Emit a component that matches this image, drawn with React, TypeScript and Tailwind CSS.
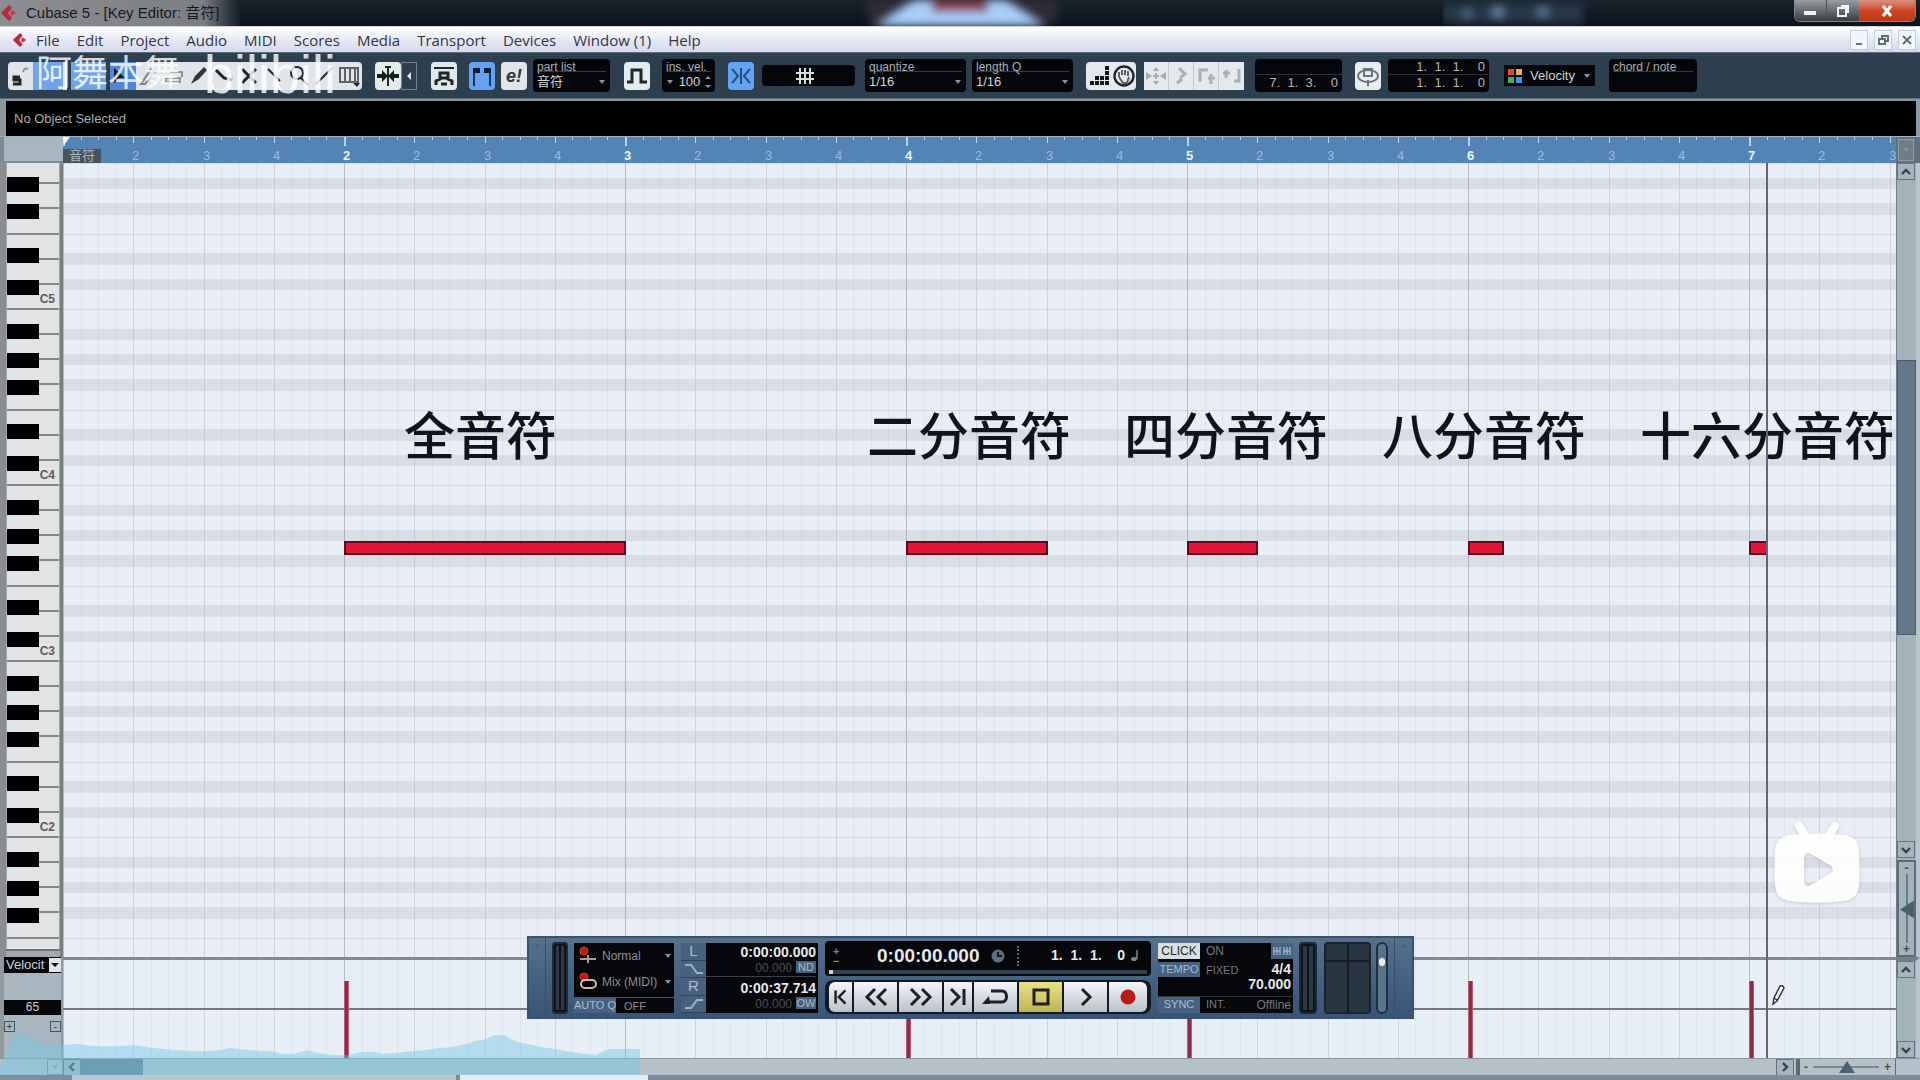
import React from "react";

const BAR = 281;
const at = (beats: number) => Math.round((beats * BAR) / 4);

type Mark = { x: number; kind: "bar" | "beat" | "step" };
const MARKS: Mark[] = Array.from({ length: 106 }, (_, i) => ({
  x: at(i / 4),
  kind: i % 16 === 0 ? "bar" : i % 4 === 0 ? "beat" : "step",
}));

const NOTES = [
  { beat: 4, length: 4 },
  { beat: 12, length: 2 },
  { beat: 16, length: 1 },
  { beat: 20, length: 0.5 },
  { beat: 24, length: 0.25 },
];

const CAPTIONS = [
  { text: "全音符", x: 341 },
  { text: "二分音符", x: 804 },
  { text: "四分音符", x: 1061 },
  { text: "八分音符", x: 1319 },
  { text: "十六分音符", x: 1577 },
];

const MENUS = ["File", "Edit", "Project", "Audio", "MIDI", "Scores", "Media", "Transport", "Devices", "Window (1)", "Help"];

function GridLines() {
  return (
    <svg className="absolute inset-0 h-full w-full" aria-hidden="true">
      {MARKS.map((m) => (
        <rect
          key={m.x}
          x={m.x}
          y="0"
          width="1"
          height="100%"
          fill={m.kind === "bar" ? "#80899c" : "#8d98ac"}
          opacity={m.kind === "bar" ? 0.5 : m.kind === "beat" ? 0.28 : 0.11}
        />
      ))}
    </svg>
  );
}

function OctaveRows() {
  return (
    <div className="flex w-full shrink-0 flex-col">
      <div className="h-[19px]" />
      <div className="h-[11px] bg-[#d9dde6]" />
      <div className="h-[14px]" />
      <div className="h-[11px] bg-[#d9dde6]" />
      <div className="h-[14px]" />
      <div className="h-[12px] bg-[#d9dde6]" />
      <div className="h-[20px] border-b border-[#d3d8e1]" />
      <div className="h-[18px]" />
      <div className="h-[12px] bg-[#d9dde6]" />
      <div className="h-[14px]" />
      <div className="h-[11px] bg-[#d9dde6]" />
      <div className="h-[20px] border-b border-[#d3d8e1]" />
    </div>
  );
}

function OctaveKeys({ label }: { label: string }) {
  return (
    <div className="relative flex h-44 w-full shrink-0 flex-col">
      {["B", "A", "G", "F", "E", "D", "C"].map((n) => (
        <div key={n} className="flex flex-1 items-end justify-end border-b-2 border-[#85878a] bg-[#e2e3e4] pb-0.5 pr-1 text-[12px] font-bold leading-[14px] text-[#5b5d60]">
          {n === "C" ? label : ""}
        </div>
      ))}
      <div className="absolute left-0 top-[14px] h-[15px] w-8 bg-black" />
      <div className="absolute left-0 top-[43px] h-[15px] w-8 bg-black" />
      <div className="absolute left-0 top-[70px] h-[15px] w-8 bg-black" />
      <div className="absolute left-0 top-[114px] h-[15px] w-8 bg-black" />
      <div className="absolute left-0 top-[146px] h-[15px] w-8 bg-black" />
    </div>
  );
}

function Chevron({ dir }: { dir: "up" | "down" | "left" | "right" }) {
  const d = { up: "M3 9 7 5l4 4", down: "M3 5l4 4 4-4", left: "M9 3 5 7l4 4", right: "M5 3l4 4-4 4" }[dir];
  return (
    <svg viewBox="0 0 14 14" className="h-3.5 w-3.5" fill="none" stroke="#33434d" strokeWidth="2.4" aria-hidden="true">
      <path d={d} />
    </svg>
  );
}

function ScrollButton({ dir, label }: { dir: "up" | "down" | "left" | "right"; label: string }) {
  return (
    <button aria-label={label} className="flex h-[17px] w-[18px] shrink-0 items-center justify-center border border-[#62757f] bg-[#a5b4bd]">
      <Chevron dir={dir} />
    </button>
  );
}

function CubaseLogo({ className }: { className: string }) {
  return (
    <svg viewBox="0 0 18 18" className={className} aria-hidden="true">
      <path d="M1 9 9 1l3 3-4 5 4 5-3 3z" fill="#b8283e" />
      <path d="M12 6l4 3-4 3-2-3z" fill="#c9364a" />
    </svg>
  );
}

function Tool({ label, className, children }: { label: string; className: string; children?: React.ReactNode }) {
  return (
    <button aria-label={label} className={`flex h-7 shrink-0 items-center justify-center ${className}`}>
      <svg viewBox="0 0 24 24" className="h-6 w-6" fill="none" stroke="#20262b" strokeWidth="2" aria-hidden="true">
        {children}
      </svg>
    </button>
  );
}

function Caret() {
  return (
    <svg viewBox="0 0 8 6" className="h-1.5 w-2 shrink-0" aria-hidden="true">
      <path d="M1 1h6L4 5z" fill="#8d959b" />
    </svg>
  );
}

function Field({ title, value, className }: { title: string; value: string; className: string }) {
  return (
    <div className={`flex h-[33px] shrink-0 flex-col rounded-sm bg-[#04060a] px-1 text-[12px] text-[#a9b0b5] ${className}`}>
      <span className="h-[13px] whitespace-nowrap border-b border-[#343a40] leading-4">{title}</span>
      {value && (
        <button aria-label={title} className="flex flex-1 items-center justify-between text-[13px] leading-4 text-[#d3d7da]">
          <span>{value}</span>
          <Caret />
        </button>
      )}
    </div>
  );
}

function Position({ rows, className }: { rows: string[]; className: string }) {
  return (
    <div className={`flex h-[33px] shrink-0 flex-col rounded-sm bg-[#05060b] text-right text-[13px] leading-4 text-[#b9b4ac] ${className}`}>
      {rows.map((r, i) => (
        <span key={i} className={i === 0 ? "h-4 whitespace-pre border-b border-[#2c3036] pr-1" : "h-4 whitespace-pre pr-1"}>
          {r}
        </span>
      ))}
    </div>
  );
}

function TitleBar() {
  return (
    <header className="flex h-[26px] shrink-0 items-start justify-between bg-linear-to-b from-[#1a232c] to-[#0a121b]">
      <div className="flex h-full w-[240px] shrink-0 items-center gap-2 bg-linear-to-r from-[#8d8e91] from-0% via-[#7b7e82] via-85% to-[#141c25]">
        <CubaseLogo className="h-[18px] w-[18px]" />
        <h1 className="whitespace-nowrap text-[15px] text-[#17191c]">Cubase 5 - [Key Editor: 音符]</h1>
      </div>
      <svg viewBox="0 0 900 26" className="h-[26px] w-[900px]" aria-hidden="true">
        <defs>
          <filter id="soft" x="-20%" y="-60%" width="140%" height="220%">
            <feGaussianBlur stdDeviation="4" />
          </filter>
        </defs>
        <g filter="url(#soft)">
          <path d="M476 0h190v24H476z" fill="#4a3842" opacity=".5" />
          <path d="M524 0h90l40 26H484z" fill="#a9cdf8" />
          <path d="M541 0h56v12h-56z" fill="#8a3f50" />
        </g>
      </svg>
      <svg viewBox="0 0 200 26" className="h-[26px] w-[200px]" aria-hidden="true">
        <g filter="url(#soft)">
          <path d="M0 3h140v20H0z" fill="#263848" />
          <circle cx="24" cy="14" r="5" fill="#51687e" />
          <circle cx="55" cy="12" r="6" fill="#68829c" />
          <circle cx="100" cy="12" r="6" fill="#58718a" />
        </g>
      </svg>
      <div className="mr-1 flex h-[22px] overflow-hidden rounded-b-md border border-t-0 border-[#80868c]">
        <button aria-label="Minimize" className="flex w-8 items-end justify-center border-r border-[#4b5157] bg-linear-to-b from-[#9b9ea1] to-[#3a3d42] pb-1.5">
          <span className="h-1 w-3 bg-[#eef0f1]" />
        </button>
        <button aria-label="Restore" className="flex w-8 items-center justify-center bg-linear-to-b from-[#9b9ea1] to-[#3a3d42]">
          <svg viewBox="0 0 14 14" className="h-3.5 w-3.5" fill="none" stroke="#f0f2f3" strokeWidth="2" aria-hidden="true">
            <path d="M2 4h8v8H2zM5 2h7v7" />
          </svg>
        </button>
        <button aria-label="Close" className="flex w-14 items-center justify-center bg-linear-to-b from-[#d9907e] via-[#cf4526] to-[#b83a18]">
          <svg viewBox="0 0 14 14" className="h-3.5 w-3.5" fill="none" stroke="#fff" strokeWidth="3" aria-hidden="true">
            <path d="M3 2l8 10M11 2 3 12" />
          </svg>
        </button>
      </div>
    </header>
  );
}

function MenuBar() {
  return (
    <nav className="flex h-[26px] shrink-0 items-center border-t border-[#cfd2d8] bg-linear-to-b from-white via-[#e6e9f6] to-[#d6daec] pl-3 pr-1">
      <CubaseLogo className="mr-2 h-4 w-4" />
      <div className="flex flex-1 gap-[17px] font-['Open_Sans','Noto_Sans_CJK_SC',sans-serif] text-[15px] leading-6 text-[#33363d]">
        {MENUS.map((m) => (
          <button key={m} className="whitespace-nowrap">
            {m}
          </button>
        ))}
      </div>
      <div className="flex gap-1.5">
        {[
          { label: "Minimize editor", d: "M4 11h6" },
          { label: "Restore editor", d: "M3 6h6v5H3zM6 6V3h6v5H9" },
          { label: "Close editor", d: "M3 3l8 8M11 3l-8 8" },
        ].map((b) => (
          <button key={b.label} aria-label={b.label} className="flex h-5 w-[18px] items-center justify-center border border-[#c3cdd8] bg-[#f1f6fa]">
            <svg viewBox="0 0 14 14" className="h-3.5 w-3.5" fill="none" stroke="#5c7081" strokeWidth="2" aria-hidden="true">
              <path d={b.d} />
            </svg>
          </button>
        ))}
      </div>
    </nav>
  );
}

const WHITE = "bg-[#dfe5e8]";

function ToolBar() {
  return (
    <div className="flex h-[47px] shrink-0 items-center border-y border-[#5d6f7b] bg-[#2d3e4e] pl-2">
      <Tool label="Solo editor" className="w-[25px] rounded-l-sm bg-[#dfe5e8]">
        <path d="M11 13H5v3h6v4H4" strokeWidth="3" />
        <path d="M14 8c1-4 3-4 5-3" stroke="#8c969c" />
      </Tool>
      <Tool label="Acoustic feedback" className="w-[34px] border-r-4 border-[#dfe5e8] bg-[#6fa3e6]" />
      <Tool label="Show info" className="ml-1 w-[35px] bg-[#6fa3e6]" />
      <Tool label="Object selection" className="ml-1 w-[26px] bg-[#4f86d8]">
        <path d="M3 4v15l5-5h6z" fill="#0b1626" stroke="none" />
      </Tool>
      <Tool label="Draw" className={`w-[25px] ${WHITE}`}>
        <path d="M4 20 14 5l4 3L8 20z" stroke="#7b868c" />
      </Tool>
      <Tool label="Erase" className={`w-[25px] ${WHITE}`}>
        <path d="M4 14h14v4H4zM8 8h12v5" stroke="#8c969c" />
      </Tool>
      <Tool label="Trim" className={`w-[25px] ${WHITE}`}>
        <path d="M4 20 8 12 17 3l3 3-8 9z" fill="#30363a" stroke="none" />
      </Tool>
      <Tool label="Split" className={`w-[25px] ${WHITE}`}>
        <path d="M4 6l8 8 8 2" strokeWidth="3" />
      </Tool>
      <Tool label="Mute" className={`w-[25px] ${WHITE}`}>
        <path d="M5 5l14 14M19 5 5 19" strokeWidth="3" />
      </Tool>
      <Tool label="Glue" className={`w-[25px] ${WHITE}`}>
        <path d="M6 5l12 12" />
      </Tool>
      <Tool label="Zoom" className={`w-[25px] ${WHITE}`}>
        <circle cx="10" cy="9" r="6" />
        <path d="M14 14l7 7" />
      </Tool>
      <Tool label="Line" className={`w-[25px] ${WHITE}`}>
        <path d="M4 20 20 4" />
      </Tool>
      <Tool label="Time warp" className="w-[26px] rounded-r-sm bg-[#dfe5e8]">
        <path d="M3 4h18v14H3zM8 4v14M13 4v14M18 4v14" stroke="#596369" />
        <path d="M16 19h7l-3 4z" fill="#20262b" stroke="none" />
      </Tool>

      <Tool label="Auto-scroll" className="ml-[13px] w-[26px] rounded-sm bg-[#e3ece9]">
        <path d="M12 2v20M9 3h6" />
        <path d="M12 12 6 6v4H1v4h5v4zM12 12l6-6v4h5v4h-5v4z" fill="#15201c" stroke="none" />
      </Tool>
      <button aria-label="Auto-scroll options" className="flex h-7 w-4 shrink-0 items-center justify-center border border-[#75838e]">
        <svg viewBox="0 0 6 8" className="h-2 w-1.5" aria-hidden="true">
          <path d="M5 0v8L1 4z" fill="#dfe5e8" />
        </svg>
      </button>
      <Tool label="Auto select controllers" className="ml-[14px] w-[26px] rounded-sm bg-[#dfe9ea]">
        <path d="M2 4h20" />
        <path d="M4 21v-4l4-2V9h8v6l4 2v4" strokeWidth="3" />
        <path d="M9 14h6M9 20h6" strokeWidth="3" />
      </Tool>
      <Tool label="Show part borders" className="ml-3 w-[26px] rounded-sm bg-[#65a3f2]">
        <path d="M4 22V6h4M20 22V6h-4" stroke="#183457" />
        <path d="M3 4h7v5H3zM14 4h7v5h-7z" fill="#0d1b30" stroke="none" />
      </Tool>
      <button className="ml-1.5 h-7 w-[26px] shrink-0 rounded-sm bg-[#dfe5e8] text-[18px] font-bold italic leading-7 text-[#30363a]">e!</button>
      <Field title="part list" value="音符" className="ml-1.5 w-[77px]" />
      <Tool label="Step input" className="ml-[14px] w-[26px] rounded-sm bg-[#e3ecee]">
        <path d="M2 18h5V6h9v12h6" strokeWidth="3" />
      </Tool>
      <div className="ml-3 flex h-[33px] w-[53px] shrink-0 flex-col rounded-sm bg-[#04060a] px-1 text-[12px] text-[#a9b0b5]">
        <span className="h-[13px] whitespace-nowrap border-b border-[#343a40] leading-4">ins. vel.</span>
        <button aria-label="Insert velocity" className="flex flex-1 items-center justify-between text-[13px] text-[#d3d7da]">
          <Caret />
          100
          <svg viewBox="0 0 6 14" className="h-3.5 w-1.5" fill="#8d959b" aria-hidden="true">
            <path d="M0 4h6L3 1zM0 10h6l-3 3z" />
          </svg>
        </button>
      </div>
      <Tool label="Snap" className="ml-[13px] w-[26px] rounded-sm bg-[#65a3f2]">
        <path d="M12 4v16M3 5l6 7-6 7M21 5l-6 7 6 7" stroke="#264d80" />
      </Tool>
      <button aria-label="Snap type" className="ml-2 flex h-[21px] w-[93px] shrink-0 items-center justify-center rounded-sm bg-[#04060a]">
        <svg viewBox="0 0 18 16" className="mr-2 h-4 w-[18px]" fill="none" stroke="#d5e2dc" strokeWidth="2" aria-hidden="true">
          <path d="M4 0v16M9 0v16M14 0v16M0 5h18M0 11h18" />
        </svg>
      </button>
      <Field title="quantize" value="1/16" className="ml-2.5 w-[101px]" />
      <Field title="length Q" value="1/16" className="ml-1.5 w-[101px]" />
      <Tool label="Step" className="ml-[13px] w-[25px] rounded-l-sm bg-[#e3e9ec]">
        <g fill="#14181b" stroke="none">
          <path d="M3 17h4v4H3zM8 17h4v4H8zM13 17h4v4h-4zM18 17h4v4h-4zM8 12h4v4H8zM13 12h4v4h-4zM18 12h4v4h-4zM18 7h4v4h-4zM18 2h4v4h-4z" />
        </g>
      </Tool>
      <Tool label="MIDI input" className="w-[25px] rounded-r-sm bg-[#e3e9ec]">
        <circle cx="12" cy="12" r="9.5" strokeWidth="2.4" />
        <path d="M7 13V8M10 11V6M13 11V6M16 12V7M7 13l4 6h4l2-6" stroke="#596369" />
      </Tool>
      <Tool label="Move insert mode" className="ml-2 w-[25px] border-r border-[#c2cacf] bg-[#e3e9ec]">
        <path d="M12 3l3 4H9zM12 21l3-4H9zM2 8l6 4-6 4zM22 8l-6 4 6 4z" fill="#a3acb2" stroke="none" />
        <path d="M12 9v6M9 12h6" stroke="#a3acb2" />
      </Tool>
      <Tool label="Record note pitch" className="w-[25px] border-r border-[#c2cacf] bg-[#e3e9ec]">
        <path d="M10 4l6 6-5 4M8 19l5-4" stroke="#a9b1b6" strokeWidth="3" />
      </Tool>
      <Tool label="Record note-on velocity" className="w-[25px] border-r border-[#c2cacf] bg-[#e3e9ec]">
        <path d="M6 18V6h8M14 14h7M17 10v10" stroke="#a9b1b6" strokeWidth="3" />
      </Tool>
      <Tool label="Record note-off velocity" className="w-[25px] bg-[#e3e9ec]">
        <path d="M6 6v8M3 9h7M19 5v12h-5" stroke="#a9b1b6" strokeWidth="3" />
      </Tool>
      <Position rows={["", "7.  1.  3.    0"]} className="ml-[11px] w-[87px]" />
      <Tool label="Independent track loop" className="ml-[13px] w-[26px] rounded-sm bg-[#e8eff0]">
        <ellipse cx="12" cy="12" rx="10" ry="6" stroke="#6b757b" />
        <path d="M8 5h8v7H8zM12 16v6" stroke="#6b757b" />
      </Tool>
      <Position rows={["1.  1.  1.    0", "1.  1.  1.    0"]} className="ml-[7px] w-[101px]" />
      <button className="ml-[15px] flex h-[21px] w-[91px] shrink-0 items-center justify-between bg-[#04060a] px-1 text-[13px] text-[#cfd4d8]">
        <svg viewBox="0 0 14 14" className="h-3.5 w-3.5" aria-hidden="true">
          <path d="M0 0h6v6H0z" fill="#d9502c" />
          <path d="M8 0h6v6H8z" fill="#e8b04a" />
          <path d="M0 8h6v6H0z" fill="#3fae6d" />
          <path d="M8 8h6v6H8z" fill="#3c9be8" />
        </svg>
        Velocity
        <Caret />
      </button>
      <Field title="chord / note" value="" className="ml-[14px] w-[88px]" />
    </div>
  );
}

function Ruler() {
  return (
    <div className="flex h-[27px] shrink-0 border-t border-[#9fb4c6]">
      <div className="w-[63px] shrink-0 border-b-2 border-l-4 border-[#7d8b93] bg-[#a9b6bf]" />
      <div className="relative flex-1 overflow-hidden bg-[#5384b5]">
        <svg className="absolute inset-0 h-full w-full" aria-hidden="true">
          {MARKS.map((m) => (
            <rect key={m.x} x={m.x} y="0" width={m.kind === "bar" ? 2 : 1} height={m.kind === "bar" ? 9 : m.kind === "beat" ? 6 : 3} fill="#bcd4e6" />
          ))}
          <path d="M0 0h7L1 8z" fill="#fff" />
        </svg>
        {MARKS.filter((m) => m.kind !== "step" && m.x > 0).map((m, i) => {
          const n = i + 1;
          const isBar = n % 4 === 0;
          return (
            <span
              key={m.x}
              className={isBar ? "absolute bottom-0 text-[13px] font-bold leading-[14px] text-[#e9f4fb]" : "absolute bottom-0 text-[13px] leading-[14px] text-[#9dbdd6]"}
              style={{ left: m.x - 1 }}
            >
              {isBar ? n / 4 + 1 : (n % 4) + 1}
            </span>
          );
        })}
        <span className="absolute bottom-0 left-0 h-[14px] w-[38px] bg-[#46535c] text-center text-[13px] leading-[14px] text-[#aeb9bf]">音符</span>
      </div>
      <div className="w-6 shrink-0 bg-[#5f717c] pl-0.5">
        <button aria-label="Ruler format" className="mt-0.5 flex h-[22px] w-4 items-center justify-center border border-[#8d9ba4] bg-[#6e7d87]">
          <Caret />
        </button>
      </div>
    </div>
  );
}

function NoteEditor() {
  return (
    <div className="flex h-0 flex-1">
      <div className="flex w-[63px] shrink-0 flex-col border-l-[6px] border-r-[3px] border-[#76807f] border-l-[#8b8d91] bg-[#9faab0] pb-1.5">
        <div className="flex h-0 flex-1 flex-col overflow-hidden border-b-2 border-[#6d7478] px-px">
          <div className="flex h-[147px] shrink-0 flex-col justify-end overflow-hidden">
            <OctaveKeys label="C5" />
          </div>
          <OctaveKeys label="C4" />
          <OctaveKeys label="C3" />
          <OctaveKeys label="C2" />
          <OctaveKeys label="" />
        </div>
      </div>
      <div className="relative flex flex-1 flex-col overflow-hidden bg-[#e8edf6]">
        <div className="flex h-[147px] shrink-0 flex-col justify-end overflow-hidden">
          <OctaveRows />
        </div>
        <OctaveRows />
        <OctaveRows />
        <OctaveRows />
        <OctaveRows />
        <GridLines />
        {NOTES.map((n) => (
          <div
            key={n.beat}
            className="absolute top-[378px] h-[14px] border-2 border-[#5c0a1c] bg-[#df1535]"
            style={{ left: at(n.beat), width: at(n.length) + 1 }}
          />
        ))}
        {CAPTIONS.map((c) => (
          <span
            key={c.text}
            className="absolute top-[249px] whitespace-nowrap text-[51px] font-medium leading-[52px] text-[#10131a]"
            style={{ left: c.x }}
          >
            {c.text}
          </span>
        ))}
      </div>
      <div className="flex w-6 shrink-0 flex-col border-l border-r-4 border-[#6e8089] border-r-[#b9c5cb] bg-[#a3b3bc]">
        <ScrollButton dir="up" label="Scroll up" />
        <div className="flex flex-1 flex-col">
          <div className="flex-[180]" />
          <div className="flex-[274] border border-[#4b5b67] bg-[#64788a]" />
          <div className="flex-[206]" />
        </div>
        <ScrollButton dir="down" label="Scroll down" />
        <div className="mt-0.5 flex h-[97px] shrink-0 flex-col items-center border-2 border-[#5b6c76] text-[12px] font-bold leading-3 text-[#3d4c55]">
          <span>-</span>
          <svg viewBox="0 0 16 70" className="h-[70px] w-4" aria-hidden="true">
            <path d="M8 0v70" stroke="#6a7b85" strokeWidth="2" />
            <path d="M1 36 15 27v18z" fill="#48606d" />
          </svg>
          <span>+</span>
        </div>
      </div>
    </div>
  );
}

function VelocityLane() {
  return (
    <div className="flex h-[101px] shrink-0">
      <div className="flex w-[63px] shrink-0 flex-col border-l-4 border-r-2 border-[#8f999e] bg-[#a9b6bf]">
        <button className="flex h-4 items-center justify-between bg-[#05070a] pl-0.5 text-[13px] leading-4 text-[#cfd3d6]">
          Velocit
          <span className="flex h-3.5 w-3 items-center justify-center bg-[#dfe5e8]">
            <svg viewBox="0 0 8 6" className="h-1.5 w-2" aria-hidden="true">
              <path d="M0 1h8L4 5z" fill="#111" />
            </svg>
          </span>
        </button>
        <div className="mt-[27px] h-[15px] bg-[#05070a] text-center text-[12px] leading-[15px] text-[#cfd3d6]">65</div>
        <div className="mt-1.5 flex justify-between">
          {["+", "-"].map((s) => (
            <button key={s} aria-label={s === "+" ? "Add lane" : "Remove lane"} className="h-[11px] w-[11px] border border-[#47555e] text-[10px] leading-[8px] text-[#35424a]">
              {s}
            </button>
          ))}
        </div>
      </div>
      <div className="relative flex-1 overflow-hidden border-t-[3px] border-[#85898d] bg-[#e8eef6]">
        <GridLines />
        <div className="absolute left-0 right-0 top-[48px] h-0.5 bg-[#74787c]" />
        {NOTES.map((n) => (
          <div key={n.beat} className="absolute bottom-0 top-[21px] w-[5px] border-x border-[#c0566f] bg-[#86304a]" style={{ left: at(n.beat) }} />
        ))}
      </div>
      <div className="flex w-6 shrink-0 flex-col border-l border-r-4 border-t-4 border-[#6e8089] border-r-[#b9c5cb] bg-[#a3b3bc]">
        <ScrollButton dir="up" label="Scroll lane up" />
        <div className="flex-1" />
        <ScrollButton dir="down" label="Scroll lane down" />
      </div>
    </div>
  );
}

function HorizontalScroll() {
  return (
    <>
      <div className="flex h-[17px] shrink-0 items-center border-t border-[#8c969d] bg-[#b4c1ca] pl-[47px] pr-6">
        <button aria-label="Lane presets" className="flex h-4 w-4 items-center justify-center border border-[#7b8a93]">
          <Caret />
        </button>
        <ScrollButton dir="left" label="Scroll left" />
        <div className="h-4 w-[62px] bg-[#61808f]" />
        <div className="flex-1" />
        <ScrollButton dir="right" label="Scroll right" />
        <div className="ml-0.5 flex h-4 w-[100px] items-center justify-between border-l-4 border-r border-[#5b6c76] px-1 text-[12px] font-bold leading-4 text-[#3d4c55]">
          <span>-</span>
          <svg viewBox="0 0 66 14" className="h-3.5 w-[66px]" aria-hidden="true">
            <path d="M0 7h66" stroke="#7b8a93" strokeWidth="2" />
            <path d="M34 1l8 12H26z" fill="#4b616e" />
          </svg>
          <span>+</span>
        </div>
      </div>
      <div className="flex h-[5px] shrink-0 bg-[#7f8d9a]">
        <div className="ml-[72px] w-[384px] bg-[#b9c7ce]" />
        <div className="ml-1 w-[188px] bg-[#e3edf1]" />
      </div>
    </>
  );
}

function Meter({ className }: { className: string }) {
  return (
    <div className={`flex h-[72px] shrink-0 gap-0.5 rounded-sm border-2 border-[#1c2a38] bg-[#0c131a] p-0.5 ${className}`}>
      <div className="flex-1 bg-[#2d3a46]" />
      <div className="flex-1 bg-[#2d3a46]" />
    </div>
  );
}

const TAG = "flex items-center justify-center whitespace-nowrap bg-[#48627e] text-[#a5bdd4]";

function PlayButton({ label, className, children }: { label: string; className: string; children: React.ReactNode }) {
  return (
    <button aria-label={label} className={`flex h-[30px] shrink-0 items-center justify-center ${className}`}>
      <svg viewBox="0 0 28 20" className="h-5 w-7" fill="none" stroke="#1d2125" strokeWidth="3" aria-hidden="true">
        {children}
      </svg>
    </button>
  );
}

const SILVER = "bg-linear-to-b from-[#f4f6f8] to-[#b9c2ca]";

function TransportPanel() {
  return (
    <section
      aria-label="Transport"
      className="absolute bottom-[61px] left-[527px] flex h-[83px] w-[887px] items-center border-2 border-[#3a5169] bg-linear-to-b from-[#56718d] to-[#385577] text-[12px]"
    >
      <div className="flex h-full w-[17px] shrink-0 justify-center border-r border-[#33506f] text-[10px] leading-4 text-[#223a54]">▫</div>
      <Meter className="ml-1.5 w-4" />
      <div className="ml-1.5 flex h-[70px] w-[100px] shrink-0 flex-col bg-[#05070b] text-[#8e8e92]">
        {["Normal", "Mix (MIDI)"].map((t, i) => (
          <button key={t} className="flex h-[26px] items-center gap-1 whitespace-nowrap pl-1 pr-0.5">
            <svg viewBox="0 0 20 20" className="h-5 w-5 shrink-0" fill="none" aria-hidden="true">
              <circle cx="6" cy="5" r="4" fill="#b3200e" stroke="#e0391f" />
              {i === 0 ? (
                <path d="M2 13h16M10 9v8" stroke="#b59a94" strokeWidth="2" />
              ) : (
                <rect x="3" y="8" width="15" height="8" rx="4" stroke="#d8b8a8" strokeWidth="2" />
              )}
            </svg>
            <span className="flex-1 text-left">{t}</span>
            <Caret />
          </button>
        ))}
        <div className="mt-0.5 flex h-4 gap-2 border-t border-[#45566a] text-[11px]">
          <button className={`w-[42px] ${TAG}`}>AUTO Q</button>
          <span className="leading-4">OFF</span>
        </div>
      </div>
      <div className="ml-[7px] flex h-[70px] w-[137px] shrink-0 bg-[#05070b]">
        <div className="flex w-[25px] flex-col justify-between bg-[#2c415a]">
          <button className={`h-[17px] text-[15px] ${TAG}`}>L</button>
          <button aria-label="Punch in" className={`h-4 ${TAG}`}>
            <svg viewBox="0 0 20 10" className="h-2.5 w-5" fill="none" stroke="#9ab3ca" strokeWidth="2" aria-hidden="true">
              <path d="M1 1h6l6 8h6" />
            </svg>
          </button>
          <button className={`h-[17px] text-[15px] ${TAG}`}>R</button>
          <button aria-label="Punch out" className={`h-4 ${TAG}`}>
            <svg viewBox="0 0 20 10" className="h-2.5 w-5" fill="none" stroke="#9ab3ca" strokeWidth="2" aria-hidden="true">
              <path d="M1 9h6l6-8h6" />
            </svg>
          </button>
        </div>
        <div className="flex flex-1 flex-col justify-between pr-0.5">
          {[
            ["0:00:00.000", "ND"],
            ["0:00:37.714", "OW"],
          ].map(([time, tag], i) => (
            <div key={time} className={i === 0 ? "flex h-[34px] flex-col border-b border-[#39424c]" : "flex h-[34px] flex-col"}>
              <span className="text-right text-[14px] font-bold leading-[18px] text-[#e8eaec]">{time}</span>
              <div className="flex justify-end gap-1 leading-[14px] text-[#4b4e52]">
                00.000
                <span className={`h-3 w-5 text-[11px] ${TAG}`}>{tag}</span>
              </div>
            </div>
          ))}
        </div>
      </div>
      <div className="ml-[7px] flex h-[73px] w-[326px] shrink-0 flex-col justify-between">
        <div className="flex h-[35px] flex-col rounded bg-[#05070b] text-[#e6e8ea]">
          <div className="flex flex-1 items-center pl-2 pr-3">
            <div className="flex w-11 flex-col text-[11px] font-bold leading-2.5 text-[#6f859a]">
              <span>+</span>
              <span>−</span>
            </div>
            <span className="w-[108px] text-[19px] font-bold leading-6">0:00:00.000</span>
            <svg viewBox="0 0 14 14" className="ml-1.5 h-3.5 w-3.5 shrink-0" aria-hidden="true">
              <circle cx="7" cy="7" r="6.5" fill="#587082" />
              <path d="M7 3v4h4" stroke="#0c131a" strokeWidth="2" fill="none" />
            </svg>
            <span className="ml-3 h-5 w-0 border-l-2 border-dotted border-[#5c6974]" />
            <span className="flex-1 whitespace-pre text-right text-[14px] font-bold">1.  1.  1.    0</span>
            <svg viewBox="0 0 10 12" className="ml-1 h-3 w-2.5" aria-hidden="true">
              <path d="M8 0v9" stroke="#7c878f" strokeWidth="1.5" />
              <ellipse cx="5" cy="9" rx="3" ry="2" fill="#7c878f" />
            </svg>
          </div>
          <div className="mx-1 mb-0.5 flex h-1 items-center bg-[#334352]">
            <span className="h-1 w-1 bg-[#c9d3da]" />
          </div>
        </div>
        <div className="flex h-[34px] items-center gap-0.5 rounded-lg bg-[#121a24] px-1">
          <PlayButton label="Go to left locator" className={`w-[23px] rounded-l-md ${SILVER}`}>
            <path d="M8 2v16M20 2l-8 8 8 8" />
          </PlayButton>
          <PlayButton label="Rewind" className={`w-[43px] ${SILVER}`}>
            <path d="M13 2 5 10l8 8M24 2l-8 8 8 8" />
          </PlayButton>
          <PlayButton label="Forward" className={`w-[43px] ${SILVER}`}>
            <path d="M4 2l8 8-8 8M15 2l8 8-8 8" />
          </PlayButton>
          <PlayButton label="Go to right locator" className={`w-[28px] ${SILVER}`}>
            <path d="M7 2l8 8-8 8M20 2v16" />
          </PlayButton>
          <PlayButton label="Cycle" className={`w-[43px] ${SILVER}`}>
            <path d="M9 4h11c6 0 6 11 0 11H7" />
            <path d="M0 17l7-8 1 8z" fill="#1d2125" stroke="none" />
          </PlayButton>
          <PlayButton label="Stop" className="w-[43px] bg-linear-to-b from-[#e9e08a] to-[#c0b450]">
            <path d="M7 3h14v14H7z" />
          </PlayButton>
          <PlayButton label="Play" className={`w-[43px] ${SILVER}`}>
            <path d="M10 2l8 8-8 8" />
          </PlayButton>
          <PlayButton label="Record" className={`w-[38px] rounded-r-md ${SILVER}`}>
            <circle cx="14" cy="10" r="7.5" fill="#b81c14" stroke="none" />
          </PlayButton>
        </div>
      </div>
      <div className="ml-[7px] flex h-[70px] w-[135px] shrink-0 flex-col justify-between bg-[#05070b] text-[#77797d]">
        <div className="flex h-4 items-center gap-1.5">
          <button className="h-4 w-[42px] bg-[#d9dee2] leading-4 text-[#24282c]">CLICK</button>
          <span className="flex-1">ON</span>
          <span aria-label="Precount" className={`h-4 w-[22px] ${TAG}`}>
            <svg viewBox="0 0 18 10" className="h-2.5 w-[18px]" fill="none" stroke="#93adc6" strokeWidth="1.5" aria-hidden="true">
              <path d="M1 1v8M4 1v8M7 1v8M11 1v8M14 1v8M17 1v8M1 5h6M11 5h6" />
            </svg>
          </span>
        </div>
        <div className="flex items-start gap-1.5">
          <button className={`h-[15px] w-[42px] text-[11px] ${TAG}`}>TEMPO</button>
          <span className="text-[11px]">FIXED</span>
          <div className="flex flex-1 flex-col pr-0.5 text-right text-[14px] font-bold leading-[15px] text-[#e6e8ea]">
            <span>4/4</span>
            <span>70.000</span>
          </div>
        </div>
        <div className="flex h-[17px] items-center gap-1.5 border-t border-[#2c3640]">
          <button className={`h-4 w-[42px] text-[11px] ${TAG}`}>SYNC</button>
          <span className="flex-1 text-[11px]">INT.</span>
          <span className="pr-0.5">Offline</span>
        </div>
      </div>
      <Meter className="ml-1.5 w-[18px]" />
      <div className="ml-[7px] grid h-[72px] w-[47px] shrink-0 grid-cols-2 grid-rows-[1fr_3fr] gap-0.5 rounded border-2 border-[#18232e] bg-[#141d27]">
        {[0, 1, 2, 3].map((i) => (
          <div key={i} className="bg-[#28343f]" />
        ))}
      </div>
      <div className="ml-[5px] flex h-[72px] w-3 shrink-0 justify-center rounded-full border-2 border-[#1f3042] bg-[#5b738a] pt-3.5">
        <span className="h-2 w-1.5 rounded-full bg-[#e6eef4]" />
      </div>
      <div className="ml-1.5 h-full flex-1 border-l border-[#33506f] text-center text-[10px] leading-4 text-[#223a54]">▫</div>
    </section>
  );
}

function Overlays() {
  return (
    <>
      <div className="pointer-events-none absolute left-9 top-12 flex items-center whitespace-nowrap text-white/80">
        <span className="text-[36px] leading-[52px]">阿舞本舞</span>
        <span className="ml-6 text-[54px] leading-[52px]">bilibili</span>
      </div>
      <svg viewBox="0 0 88 86" className="absolute bottom-[173px] right-[59px] h-[86px] w-[88px] drop-shadow" aria-hidden="true">
        <path d="M26 5l7 11M62 5l-7 11" stroke="#fff" strokeWidth="8" strokeLinecap="round" />
        <path
          fillRule="evenodd"
          d="M16 14Q44 11 72 14 85 16 86 30 87 48 86 64 85 78 72 80 44 83 16 80 3 78 2 64 1 48 2 30 3 16 16 14zM31 37v23q1 7 7 4l20-12q4-3 0-7L38 33q-6-3-7 4z"
          fill="#fff"
          fillOpacity=".94"
        />
      </svg>
      <svg viewBox="0 0 14 22" className="absolute bottom-[74px] right-[135px] h-[22px] w-3.5" fill="#f4f6f8" stroke="#33383d" strokeWidth="1.5" aria-hidden="true">
        <path d="M2 20l1-6L9 2q3-1 4 2L6 17zM3 14l3 2" />
      </svg>
      <svg viewBox="0 0 640 46" className="absolute bottom-[5px] left-0 h-[46px] w-[640px]" aria-hidden="true">
        <path
          d="M0 37Q5 30 9 17 14 3 20 3 25 4 33 11 42 14 50 15 62 16 80 15 95 19 135 16 155 20 190 22 212 23 230 19 250 22 272 22 287 29 307 21 325 27 350 26 366 20 382 25 408 23 440 19 460 18 475 12 488 11 494 6 499 6 504 6 512 12 522 14 540 18 560 21 580 25 596 26 606 20 612 20H640V46H0z"
          fill="#73c8e6"
          fillOpacity=".45"
        />
      </svg>
    </>
  );
}

export default function App() {
  return (
    <main className="relative flex h-screen min-h-[700px] w-full flex-col overflow-hidden bg-[#8b9aa4] font-['Liberation_Sans','Noto_Sans_CJK_SC',sans-serif]">
      <TitleBar />
      <MenuBar />
      <ToolBar />
      <div className="mr-1 flex h-[37px] shrink-0 items-center border-t-2 border-l-[6px] border-[#8b969d] bg-black pl-2 text-[13px] text-[#a9acae]">
        No Object Selected
      </div>
      <div className="relative flex min-h-0 flex-1 flex-col">
        <Ruler />
        <NoteEditor />
        <VelocityLane />
        <div className="absolute bottom-0 left-[1766px] top-[27px] w-0.5 bg-[#63676d]" />
      </div>
      <HorizontalScroll />
      <TransportPanel />
      <Overlays />
    </main>
  );
}
